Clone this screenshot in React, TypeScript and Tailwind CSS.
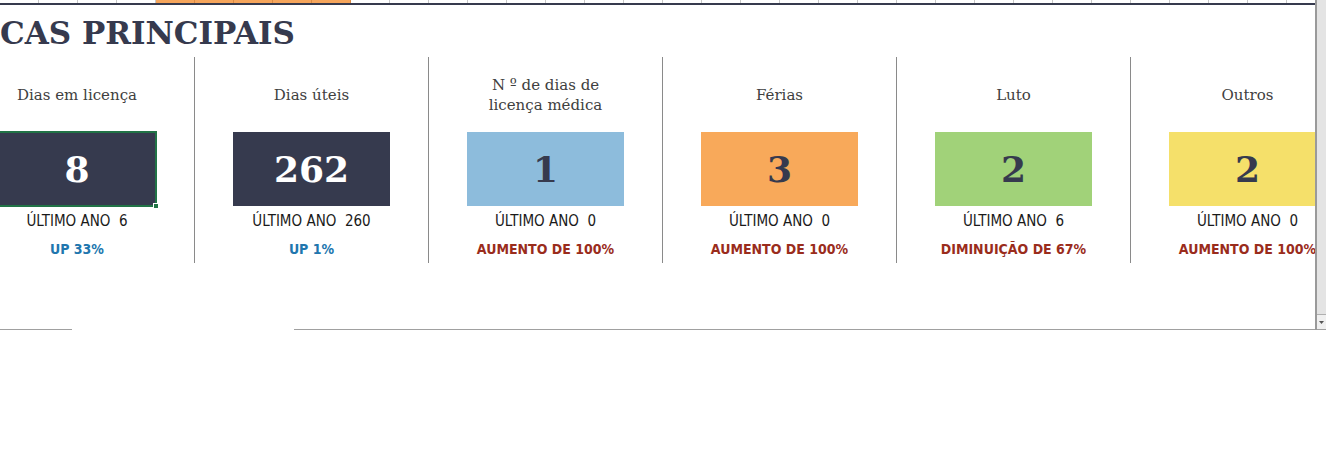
const metrics = [
  { title: ["Dias em licença"], value: "8", prev: "6", change: "UP 33%", up: true, box: "bg-[#363a4e] text-white", selected: true },
  { title: ["Dias úteis"], value: "262", prev: "260", change: "UP 1%", up: true, box: "bg-[#363a4e] text-white" },
  { title: ["N º de dias de", "licença médica"], value: "1", prev: "0", change: "AUMENTO DE 100%", up: false, box: "bg-[#8dbcdc] text-[#363a4e]" },
  { title: ["Férias"], value: "3", prev: "0", change: "AUMENTO DE 100%", up: false, box: "bg-[#f8a95a] text-[#363a4e]" },
  { title: ["Luto"], value: "2", prev: "6", change: "DIMINUIÇÃO DE 67%", up: false, box: "bg-[#a1d279] text-[#363a4e]" },
  { title: ["Outros"], value: "2", prev: "0", change: "AUMENTO DE 100%", up: false, box: "bg-[#f5e06a] text-[#363a4e]" },
];

const serif = "font-['DejaVu_Serif',serif]";
const narrow = "font-['DejaVu_Sans_Condensed','DejaVu_Sans',sans-serif] [font-stretch:condensed]";

function MetricCard({ m, first }: { m: (typeof metrics)[number]; first: boolean }) {
  return (
    <div className={`w-[234px] shrink-0 flex flex-col items-center ${first ? "" : "border-l border-[#8a8a8a]"}`}>
      <div className={`h-[75px] flex flex-col items-center justify-center text-[15px] leading-[20px] text-[#404040] ${serif}`}>
        {m.title.map((t) => (
          <span key={t}>{t}</span>
        ))}
      </div>
      <div className="relative">
        <div className={`w-[157px] h-[74px] flex items-center justify-center text-[36px] font-bold ${serif} ${m.box}`}>
          {m.value}
        </div>
        {m.selected && (
          <>
            <div className="absolute -inset-[1px] border-2 border-[#217346] pointer-events-none" />
            <div className="absolute right-[-3px] bottom-[-3px] w-[6px] h-[6px] bg-[#217346] border border-white" />
          </>
        )}
      </div>
      <div className={`h-[26px] pt-[4px] flex items-center text-[15px] text-[#1a1a1a] ${narrow}`}>
        ÚLTIMO ANO&nbsp;&nbsp;{m.prev}
      </div>
      <div className={`h-[31px] pt-[4px] flex items-center text-[14px] font-bold ${narrow} ${m.up ? "text-[#2176ae]" : "text-[#9a2c1c]"}`}>
        {m.change}
      </div>
    </div>
  );
}

export default function App() {
  return (
    <div className="w-[1326px] h-[460px] bg-white flex items-start overflow-hidden">
      <div className="w-[1315px] shrink-0 flex flex-col overflow-hidden">
        {/* header row of the sheet grid */}
        <div className="h-[3px] flex">
          {Array.from({ length: 34 }).map((_, i) => (
            <div
              key={i}
              className={`w-[39px] shrink-0 border-r ${i >= 4 && i < 9 ? "bg-[#f5a55c] border-[#d98a44]" : "border-[#c8c8c8]"}`}
            />
          ))}
        </div>
        <div className="h-[2px] bg-[#363a4e]" />

        <h1 className={`mt-[10px] h-[37px] text-[31px] leading-[37px] font-bold text-[#363a4e] whitespace-nowrap ${serif}`}>
          CAS PRINCIPAIS
        </h1>

        <div className="mt-[5px] -ml-[40px] flex">
          {metrics.map((m, i) => (
            <MetricCard key={i} m={m} first={i === 0} />
          ))}
        </div>

        <div className="mt-[66px] flex h-[1px]">
          <div className="w-[72px] bg-[#a0a0a0]" />
          <div className="w-[222px]" />
          <div className="flex-1 bg-[#a0a0a0]" />
        </div>
      </div>

      {/* vertical scrollbar */}
      <div className="w-[11px] h-[330px] flex flex-col border-l-2 border-[#9a9a9a] bg-[#e4e4e4]">
        <div className="flex-1" />
        <div className="h-[15px] border-t border-[#b0b0b0] bg-[#f0f0f0] flex items-center justify-center">
          <svg width="5" height="3" viewBox="0 0 5 3">
            <path d="M0 0h5L2.5 3z" fill="#555" />
          </svg>
        </div>
        <div className="h-[1px] bg-[#a0a0a0]" />
      </div>
    </div>
  );
}
